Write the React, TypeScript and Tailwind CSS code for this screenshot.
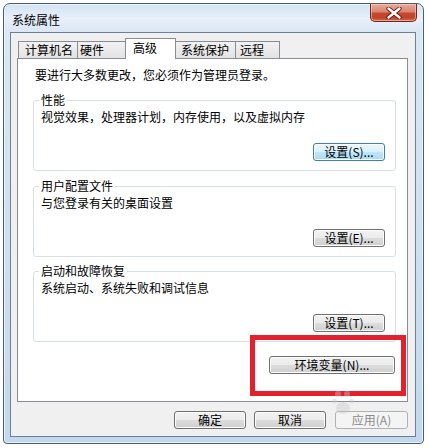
import React from "react";

type Variant = "normal" | "focus" | "disabled";

function Btn({ label, className, variant = "normal" }: { label: string; className: string; variant?: Variant }) {
  const styles: Record<Variant, string> = {
    normal:
      "border-[#707070] bg-[linear-gradient(#f2f2f2_0%,#ebebeb_50%,#dddddd_50%,#cfcfcf_100%)] text-black shadow-[inset_0_0_0_1px_#fcfcfc]",
    focus:
      "border-[#3c7fb1] bg-[linear-gradient(#eaf6fd_0%,#d9f0fc_50%,#bee6fd_50%,#a7d9f5_100%)] text-black shadow-[inset_0_0_0_1px_#fcfcfc]",
    disabled: "border-[#adb2b5] bg-[#f4f4f4] text-[#8a8a8a]",
  };
  return (
    <div
      className={`h-[18px] flex items-center justify-center rounded-[3px] border text-[12px] leading-none ${styles[variant]} ${className}`}
    >
      {label}
    </div>
  );
}

function Group({
  title,
  desc,
  btn,
  className,
  variant = "normal",
}: {
  title: string;
  desc: string;
  btn: string;
  className: string;
  variant?: Variant;
}) {
  return (
    <fieldset className={`ml-[15px] mr-[11px] border border-[#d5dfe5] rounded-[3px] px-[5px] pb-[9px] ${className}`}>
      <legend className="px-[2px] leading-[16px]">{title}</legend>
      <div className="pl-[2px] mt-[1px] leading-[16px]">{desc}</div>
      <div className="mt-[18px] flex justify-end pr-[5px]">
        <Btn label={btn} className="w-[72px]" variant={variant} />
      </div>
    </fieldset>
  );
}

function Tab({ label, className, active }: { label: string; className: string; active?: boolean }) {
  if (active) {
    return (
      <div
        className={`relative z-10 -ml-px -mb-px h-[21px] border border-b-0 border-[#898c95] bg-white leading-[16px] pt-[1px] ${className}`}
      >
        {label}
      </div>
    );
  }
  return (
    <div
      className={`h-[17px] border border-b-0 border-[#898c95] bg-[linear-gradient(#f2f2f2,#e3e3e3)] leading-[16px] ${className}`}
    >
      {label}
    </div>
  );
}

export default function App() {
  return (
    <div className="relative w-[428px] h-[448px] bg-white pt-[3px] pl-[3px] text-[12px] text-black font-['Noto_Sans_CJK_SC','Noto_Sans',sans-serif]">
      <div className="w-[421px] h-[441px] border border-[#4a5d73] rounded-t-[7px] rounded-b-[4px] bg-[linear-gradient(180deg,#d3e2f2_0%,#e8f0f9_14px,#dae7f4_28px,#c3d8ee_100%)] shadow-[inset_0_0_0_1px_#eaf2fb] flex flex-col pl-[6px] pr-[7px] pb-[6px]">
        {/* title bar */}
        <div className="h-[28px] flex items-start justify-between">
          <div className="pl-[2px] pt-[8px] leading-[16px]">系统属性</div>
          <div className="-mr-px w-[47px] h-[18px] rounded-b-[5px] border border-t-0 border-[#6e2a20] bg-[linear-gradient(#e9ab9a_0%,#da8670_45%,#c8482f_55%,#c2432b_80%,#d56a50_100%)] shadow-[inset_0_0_0_1px_rgba(255,220,210,0.5)] flex items-center justify-center">
            <svg width="16" height="12" viewBox="0 0 16 12">
              <path d="M2.5 1.5 L13.5 10.5 M13.5 1.5 L2.5 10.5" stroke="#5a1a12" strokeWidth="4.2" strokeLinecap="round" />
              <path d="M2.5 1.5 L13.5 10.5 M13.5 1.5 L2.5 10.5" stroke="#ffffff" strokeWidth="2.4" strokeLinecap="round" />
            </svg>
          </div>
        </div>

        {/* client area */}
        <div className="flex-1 border border-[#6d8096] bg-[#f0f0f0] flex flex-col pl-[6px] pr-[7px] pt-[5px] pb-[6px]">
          {/* tabs */}
          <div className="h-[20px] flex items-end ml-[1px]">
            <Tab label="计算机名" className="w-[60px] pl-[6px]" />
            <Tab label="硬件" className="-ml-px w-[49px] pl-[2px]" />
            <Tab label="高级" active className="w-[51px] pl-[7px]" />
            <Tab label="系统保护" className="-ml-px w-[61px] pl-[5px]" />
            <Tab label="远程" className="-ml-px w-[45px] pl-[4px]" />
          </div>

          {/* panel */}
          <div className="relative h-[344px] border border-[#898c95] bg-white flex flex-col pt-[8px]">
            <div className="pl-[17px] leading-[16px]">要进行大多数更改，您必须作为管理员登录。</div>
            <Group
              className="mt-[9px]"
              title="性能"
              desc="视觉效果，处理器计划，内存使用，以及虚拟内存"
              btn="设置(S)..."
              variant="focus"
            />
            <Group className="mt-[7px]" title="用户配置文件" desc="与您登录有关的桌面设置" btn="设置(E)..." />
            <Group className="mt-[6px]" title="启动和故障恢复" desc="系统启动、系统失败和调试信息" btn="设置(T)..." />
            <div className="mt-[14px] flex justify-end pr-[12px]">
              <Btn label="环境变量(N)..." className="w-[126px]" />
            </div>
            <div className="absolute left-[232px] top-[276px] w-[156px] h-[61px] border-[5px] border-[#e3202b]" />
          </div>

          {/* bottom buttons */}
          <div className="mt-[9px] flex justify-end">
            <Btn label="确定" className="w-[72px] mr-[8px]" />
            <Btn label="取消" className="w-[72px] mr-[9px]" />
            <Btn label="应用(A)" className="w-[73px]" variant="disabled" />
          </div>
        </div>
      </div>

      {/* faint watermark logo */}
      <div className="absolute left-[332px] top-[390px] opacity-40 pointer-events-none select-none">
        <svg width="22" height="26" viewBox="0 0 22 26">
          <circle cx="6" cy="4" r="3" fill="#c8c8c8" />
          <circle cx="15" cy="4" r="3" fill="#c8c8c8" />
          <circle cx="2.5" cy="11" r="2.5" fill="#c8c8c8" />
          <circle cx="19.5" cy="11" r="2.5" fill="#c8c8c8" />
          <ellipse cx="11" cy="18" rx="7" ry="6" fill="#c8c8c8" />
        </svg>
      </div>
    </div>
  );
}
